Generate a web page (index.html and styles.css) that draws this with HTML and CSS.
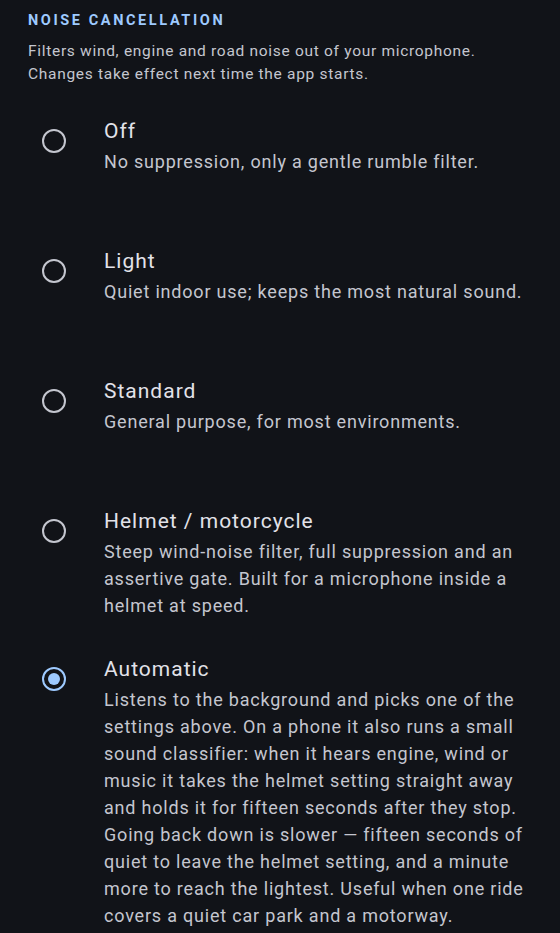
FILE: index.html
```html
<!DOCTYPE html>
<html lang="en">
<head>
<meta charset="utf-8">
<link rel="stylesheet" href="styles.css">
</head>
<body>
<main class="page">
  <h2 class="section-title">NOISE CANCELLATION</h2>
  <p class="section-desc">Filters wind, engine and road noise out of your microphone.<br>Changes take effect next time the app starts.</p>
  <div class="options">
    <div class="option">
      <span class="radio"></span>
      <div class="text">
        <div class="title">Off</div>
        <div class="desc">No suppression, only a gentle rumble filter.</div>
      </div>
    </div>
    <div class="option">
      <span class="radio"></span>
      <div class="text">
        <div class="title">Light</div>
        <div class="desc">Quiet indoor use; keeps the most natural sound.</div>
      </div>
    </div>
    <div class="option">
      <span class="radio"></span>
      <div class="text">
        <div class="title">Standard</div>
        <div class="desc">General purpose, for most environments.</div>
      </div>
    </div>
    <div class="option">
      <span class="radio"></span>
      <div class="text">
        <div class="title">Helmet / motorcycle</div>
        <div class="desc">Steep wind-noise filter, full suppression and an assertive gate. Built for a microphone inside a helmet at speed.</div>
      </div>
    </div>
    <div class="option">
      <span class="radio checked"></span>
      <div class="text">
        <div class="title">Automatic</div>
        <div class="desc">Listens to the background and picks one of the settings above. On a phone it also runs a small sound classifier: when it hears engine, wind or music it takes the helmet setting straight away and holds it for fifteen seconds after they stop. Going back down is slower — fifteen seconds of quiet to leave the helmet setting, and a minute more to reach the lightest. Useful when one ride covers a quiet car park and a motorway.</div>
      </div>
    </div>
  </div>
</main>
</body>
</html>
```

FILE: styles.css
```css
html, body {
  margin: 0;
  padding: 0;
  background: #111318;
}
body {
  font-family: Roboto, "Noto Sans", sans-serif;
  color: #c4c6cf;
}
.page {
  padding: 11px 18px 0 28px;
}
.section-title {
  margin: 0;
  font-size: 14.5px;
  font-weight: 700;
  letter-spacing: 2.6px;
  line-height: 20px;
  color: #9ecaff;
}
.section-desc {
  margin: 9px 0 0 0;
  font-size: 15.5px;
  line-height: 23px;
  letter-spacing: 0.7px;
  color: #c4c6cf;
}
.options {
  display: flex;
  flex-direction: column;
  margin-top: 12px;
}
.option {
  display: flex;
  align-items: flex-start;
  box-sizing: border-box;
  min-height: 130px;
  padding: 17px 0;
}
.radio {
  flex: none;
  box-sizing: border-box;
  width: 24px;
  height: 24px;
  margin: 14px 0 0 14px;
  border: 2.2px solid #c4c6cf;
  border-radius: 50%;
  display: flex;
  align-items: center;
  justify-content: center;
}
.radio.checked {
  border-color: #9ecaff;
}
.radio.checked::after {
  content: "";
  width: 12px;
  height: 12px;
  border-radius: 50%;
  background: #9ecaff;
}
.text {
  margin-left: 38px;
  flex: 1;
}
.title {
  font-size: 21px;
  line-height: 33px;
  letter-spacing: 1px;
  color: #e2e2e9;
}
.desc {
  font-size: 18px;
  line-height: 27px;
  letter-spacing: 0.8px;
  color: #c4c6cf;
}
```
